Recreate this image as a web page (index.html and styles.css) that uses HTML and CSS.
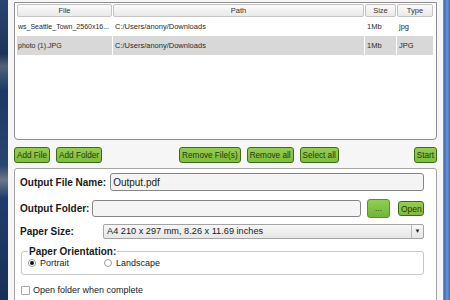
FILE: index.html
```html
<!DOCTYPE html>
<html lang="en">
<head>
<meta charset="utf-8"/>
<title>Images to PDF</title>
<link rel="stylesheet" href="styles.css">
</head>
<body>
<div class="desk">
	<div class="frame-left"></div>
	<div class="window">
		<div class="files">
			<div class="grid">
				<div class="head">File</div>
				<div class="head">Path</div>
				<div class="head">Size</div>
				<div class="head">Type</div>
				<div class="cell name">ws_Seattle_Town_2560x16...</div>
				<div class="cell">C:/Users/anony/Downloads</div>
				<div class="cell">1Mb</div>
				<div class="cell">jpg</div>
				<div class="cell name sel">photo (1).JPG</div>
				<div class="cell sel">C:/Users/anony/Downloads</div>
				<div class="cell sel">1Mb</div>
				<div class="cell sel">JPG</div>
			</div>
		</div>
		<div class="toolbar">
			<button class="btn">Add File</button>
			<button class="btn">Add Folder</button>
			<button class="btn gap">Remove File(s)</button>
			<button class="btn">Remove all</button>
			<button class="btn">Select all</button>
			<button class="btn end">Start</button>
		</div>
		<div class="options">
			<div class="row first">
				<label class="lbl" for="name">Output File Name:</label>
				<input class="field" id="name" value="Output.pdf">
			</div>
			<div class="row second">
				<label class="lbl" for="folder">Output Folder:</label>
				<input class="field" id="folder" value="">
				<button class="btn browse">...</button>
				<button class="btn open">Open</button>
			</div>
			<div class="row third">
				<label class="lbl size" for="paper">Paper Size:</label>
				<div class="select" id="paper">
					<span class="value">A4 210 x 297 mm, 8.26 x 11.69 inches</span>
					<span class="arrow">&#9660;</span>
				</div>
			</div>
			<fieldset class="orient">
				<legend>Paper Orientation:</legend>
				<span class="choice"><span class="radio on"></span>Portrait</span>
				<span class="choice"><span class="radio"></span>Landscape</span>
			</fieldset>
			<div class="check"><span class="box"></span>Open folder when complete</div>
		</div>
	</div>
	<div class="frame-right"></div>
</div>
</body>
</html>
```

FILE: styles.css
```css
html,
body {
	margin:0;
	overflow:hidden;
}
body {
	font:400 10px "Liberation Sans", Arial, sans-serif;
	color:#1a1a1a;
}
.desk {
	display:flex;
	width:450px;
	height:300px;
	overflow:hidden;
}
.frame-left {
	width:8px;
	background:linear-gradient(180deg, #2a4670 0%, #1c3458 18%, #51627a 22%, #1d3a66 30%, #28456f 55%, #6d7888 60%, #1f3d6c 66%, #173055 100%);
}
.frame-right {
	width:6px;
	border-left:1px solid #7d8ea8;
	background:linear-gradient(90deg, #3a66ad, #6b96d4 50%, #3f6db3);
}
.window {
	flex:1;
	background:#f6f6f6;
	padding:2px 6px 0;
}
.files {
	height:138px;
	box-sizing:border-box;
	border:1px solid #8e8e8e;
	border-radius:0 0 4px 4px;
	background:#fff;
	padding:1px 3px 0 2px;
}
.grid {
	display:grid;
	grid-template-columns:95px 251px 31px 36px;
	grid-template-rows:13px 19px 19px;
	column-gap:1px;
	font-size:7.5px;
}
.head {
	border:1px solid #c4c4c4;
	border-radius:2px;
	background:linear-gradient(#fbfbfb, #e9e9e9);
	text-align:center;
	line-height:11px;
	color:#333;
}
.cell {
	line-height:19px;
	padding-left:2px;
	white-space:nowrap;
	overflow:hidden;
	color:#2a2a2a;
}
.cell.name {
	font-size:7px;
	padding-left:1px;
}
.cell.sel {
	background:#d8d8d8;
}
.toolbar {
	display:flex;
	gap:6px;
	margin-top:7px;
}
.btn {
	height:16px;
	padding:0 2px;
	border:1px solid #3e6a1c;
	border-radius:3px;
	background:linear-gradient(#95cc52, #80bc3c);
	font:400 8.2px "Liberation Sans", Arial, sans-serif;
	color:#1d3a0c;
	cursor:pointer;
}
.btn.gap {
	margin-left:71px;
}
.btn.end {
	margin-left:auto;
}
.options {
	margin-top:5px;
	height:140px;
	border:1px solid #a4a4a4;
	border-radius:3px 3px 0 0;
	background:#fff;
	padding:4px 12px 0 5px;
}
.row {
	display:flex;
	align-items:center;
	gap:4px;
}
.row.second {
	margin-top:8px;
	gap:3px;
}
.row.third {
	margin-top:6px;
}
.lbl {
	font-weight:700;
	white-space:nowrap;
}
.lbl.size {
	width:79px;
}
.field {
	flex:1;
	height:18px;
	box-sizing:border-box;
	border:1px solid #858585;
	border-radius:3px;
	background:#f4f4f4;
	padding:0 2px;
	font:400 10px "Liberation Sans", Arial, sans-serif;
	color:#222;
}
.row.second .field {
	height:17px;
}
.btn.browse {
	width:23px;
	height:19px;
	margin-left:3px;
	border-color:#5b8d34;
	background:linear-gradient(#8fd04f, #6fb634);
	color:#2c4a16;
}
.btn.open {
	width:26px;
	height:15px;
	margin-left:5px;
	font-size:8.5px;
}
.select {
	flex:1;
	display:flex;
	height:15px;
	box-sizing:border-box;
	border:1px solid #a4a4a4;
	border-radius:2px;
	background:linear-gradient(#f7f7f7, #e6e6e6);
	font-size:9.2px;
	line-height:13px;
}
.select .value {
	flex:1;
	padding-left:3px;
	color:#222;
}
.select .arrow {
	width:11px;
	border-left:1px solid #b8b8b8;
	text-align:center;
	font-size:6px;
	color:#222;
}
.orient {
	margin:7px 0 0 1px;
	padding:1px 6px 6px;
	border:1px solid #c6c6c6;
	border-radius:3px;
	display:flex;
}
.orient legend {
	padding:0 1px;
	font-weight:700;
	line-height:11px;
}
.choice {
	display:flex;
	align-items:center;
	font-size:9px;
	color:#222;
}
.choice:first-of-type {
	width:76px;
}
.radio {
	width:6px;
	height:6px;
	border:1px solid #9a9a9a;
	border-radius:50%;
	margin-right:4px;
	position:relative;
	background:#fff;
}
.radio.on:after {
	content:'';
	position:absolute;
	left:1px;
	top:1px;
	width:4px;
	height:4px;
	border-radius:50%;
	background:#111;
}
.check {
	display:flex;
	align-items:center;
	margin:10px 0 0 1px;
	font-size:9px;
	color:#222;
}
.check .box {
	width:7px;
	height:7px;
	border:1px solid #a8a8a8;
	border-radius:1px;
	margin-right:3px;
	background:#fafafa;
}
```
